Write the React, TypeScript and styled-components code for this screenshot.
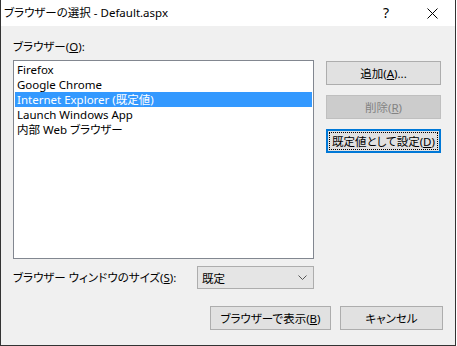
import React from "react";
import styled, { createGlobalStyle, css } from "styled-components";

const GlobalStyle = createGlobalStyle`
  html, body {
    margin: 0;
    padding: 0;
    background: #ffffff;
  }
  body {
    font-family: "Noto Sans", "Noto Sans CJK JP", sans-serif;
    font-size: 11.5px;
    font-feature-settings: "palt";
    color: #000000;
  }
`;

const browsers = [
  "Firefox",
  "Google Chrome",
  "Internet Explorer (既定値)",
  "Launch Windows App",
  "内部 Web ブラウザー",
];

const App: React.FC = () => {
  return (
    <>
      <GlobalStyle />
      <Window>
        <TitleBar>
          <TitleText>ブラウザーの選択 - Default.aspx</TitleText>
          <CaptionButton>
            <HelpGlyph>?</HelpGlyph>
          </CaptionButton>
          <CaptionButton>
            <svg width="11" height="11" viewBox="0 0 11 11">
              <path d="M0.5 0.5 L10.5 10.5 M10.5 0.5 L0.5 10.5" stroke="#000" strokeWidth="1" fill="none" />
            </svg>
          </CaptionButton>
        </TitleBar>
        <Body>
          <Label>
            ブラウザー(<u>O</u>):
          </Label>
          <MainRow>
            <ListBox>
              {browsers.map((name, i) => (
                <ListItem key={name} selected={i === 2}>
                  {name}
                </ListItem>
              ))}
            </ListBox>
            <ButtonColumn>
              <Button>
                追加(<u>A</u>)...
              </Button>
              <Button disabled>
                削除(<u>R</u>)
              </Button>
              <Button focused>
                <FocusRect>
                  既定値として設定(<u>D</u>)
                </FocusRect>
              </Button>
            </ButtonColumn>
          </MainRow>
          <SizeRow>
            <Label>
              ブラウザー ウィンドウのサイズ(<u>S</u>):
            </Label>
            <Select>
              <span>既定</span>
              <svg width="9" height="5" viewBox="0 0 9 5">
                <path d="M0.5 0.5 L4.5 4.5 L8.5 0.5" stroke="#555" strokeWidth="1" fill="none" />
              </svg>
            </Select>
          </SizeRow>
          <Footer>
            <Button width={121}>
              ブラウザーで表示(<u>B</u>)
            </Button>
            <Button width={103}>キャンセル</Button>
          </Footer>
        </Body>
      </Window>
    </>
  );
};

const Window = styled.div`
  width: 456px;
  height: 346px;
  box-sizing: border-box;
  border: 1px solid #333333;
  border-top: none;
  display: flex;
  flex-direction: column;
  background: #f0f0f0;
`;

const TitleBar = styled.div`
  height: 26px;
  background: #ffffff;
  display: flex;
  align-items: center;
`;

const TitleText = styled.div`
  flex: 1;
  padding-left: 3px;
  line-height: 26px;
  white-space: nowrap;
`;

const CaptionButton = styled.div`
  width: 46px;
  height: 26px;
  display: flex;
  align-items: center;
  justify-content: center;
`;

const HelpGlyph = styled.span`
  font-size: 14px;
  line-height: 14px;
`;

const Body = styled.div`
  flex: 1;
  padding: 13px 12px 15px;
  display: flex;
  flex-direction: column;
`;

const Label = styled.div`
  height: 15px;
  line-height: 15px;
  white-space: nowrap;
`;

const MainRow = styled.div`
  margin-top: 6px;
  display: flex;
  gap: 12px;
`;

const ListBox = styled.div`
  width: 301px;
  height: 199px;
  box-sizing: border-box;
  border: 1px solid #828790;
  background: #ffffff;
  padding: 1px;
`;

const ListItem = styled.div<{ selected?: boolean }>`
  height: 15px;
  line-height: 15px;
  padding-left: 2px;
  white-space: nowrap;
  overflow: hidden;
  ${(p) =>
    p.selected &&
    css`
      background: #3399ff;
      color: #ffffff;
    `}
`;

const ButtonColumn = styled.div`
  margin-top: 1px;
  width: 115px;
  display: flex;
  flex-direction: column;
  gap: 10px;
`;

const Button = styled.button<{ focused?: boolean; width?: number }>`
  width: ${(p) => (p.width ? `${p.width}px` : "100%")};
  height: 24px;
  box-sizing: border-box;
  border: 1px solid #adadad;
  background: #e1e1e1;
  font-family: inherit;
  font-size: inherit;
  font-feature-settings: inherit;
  color: #000000;
  padding: 0;
  white-space: nowrap;
  display: flex;
  align-items: center;
  justify-content: center;

  &:disabled {
    background: #cccccc;
    border-color: #bfbfbf;
    color: #838383;
  }

  ${(p) =>
    p.focused &&
    css`
      border: 2px solid #0078d7;
      padding: 1px;
    `}
`;

const FocusRect = styled.span`
  flex: 1;
  align-self: stretch;
  display: flex;
  align-items: center;
  justify-content: center;
  white-space: nowrap;
  outline: 1px dotted #000000;
  outline-offset: -1px;
`;

const SizeRow = styled.div`
  margin-top: 7px;
  width: 301px;
  height: 23px;
  display: flex;
  align-items: center;
  justify-content: space-between;
`;

const Select = styled.div`
  width: 117px;
  height: 23px;
  box-sizing: border-box;
  border: 1px solid #adadad;
  background: #e5e5e5;
  padding: 0 6px 0 4px;
  display: flex;
  align-items: center;
  justify-content: space-between;
`;

const Footer = styled.div`
  margin-top: 17px;
  display: flex;
  justify-content: flex-end;
  gap: 9px;
`;

export default App;
